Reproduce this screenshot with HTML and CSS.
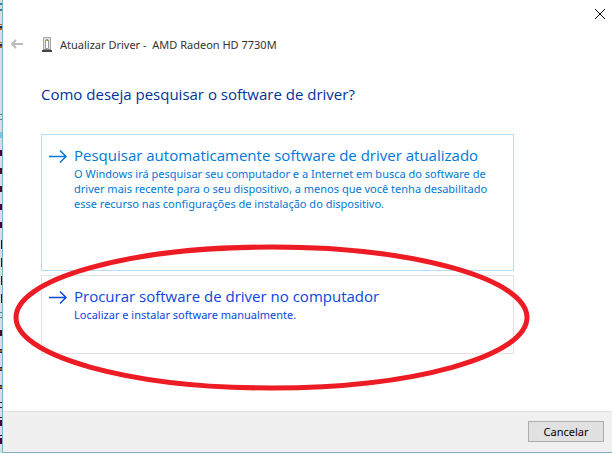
FILE: index.html
```html
<!DOCTYPE html>
<html lang="pt-BR">
<head>
  <meta charset="UTF-8">
  <meta name="viewport" content="width=device-width, initial-scale=1.0">
  <title>Atualizar Driver</title>
  <link rel="stylesheet" href="styles.css">
</head>
<body>

<div class="desktop">
  <!-- Edge of the window behind -->
  <svg class="backdrop" width="2" height="453" viewBox="0 0 2 453" aria-hidden="true">
    <path stroke="#3f7fae" stroke-width="2" d="M1 3v2M1 9v2M1 114v1M1 119v1M1 312v1M1 317v1"/>
    <path stroke="#7fc4e4" stroke-width="2" d="M1 132v6"/>
    <path stroke="#a8641c" stroke-width="2" d="M1 24v1M1 28v2M1 42v1M1 46v2M1 350v2M1 368v2M1 386v2"/>
    <path stroke="#1c2a5a" stroke-width="2" d="M1 26v2M1 44v2M1 349v1M1 352v1M1 367v1M1 370v1M1 385v1M1 388v1"/>
    <path stroke="#4a0030" stroke-width="2" d="M1 150v6M1 168v6M1 186v6M1 204v6M1 222v6M1 330v6M1 420v6M1 438v6"/>
    <path stroke="#4a0030" d="M1.500 240v9M1.500 258v9M1.500 276v9M1.500 294v9"/>
    <path stroke="#222" stroke-width="2" d="M1 402v1M1 407v1M1 417v1M1 435v1"/>
  </svg>

  <div class="window">
    <div class="titlebar">
      <button class="close-btn" title="Fechar" aria-label="Fechar">
        <svg width="10" height="10" viewBox="0 0 10 10"><path d="M0 0l10 10M10 0L0 10"/></svg>
      </button>
    </div>

    <header class="header">
      <button class="back-btn" title="Voltar" aria-label="Voltar">
        <svg width="12" height="10" viewBox="0 0 12 10"><path d="M12 5H1M5 1L1 5l4 4"/></svg>
      </button>
      <svg class="device-icon" width="10" height="15" viewBox="0 0 10 15" aria-hidden="true">
        <path fill="#e4e4e4" stroke="#a8a8a8" d="M1.500 .500h7v12h-7z"/>
        <path fill="#fff" stroke="#999" d="M3.500 11.500V3.500l1.500-1.500 1.500 1.500v8z"/>
        <path fill="#74b83a" d="M3 4l2-2 2 2H3z"/>
        <path fill="#888" d="M1 12h8v1H1z"/>
        <path fill="#444" d="M0 13h10v2H0z"/>
      </svg>
      <span class="title">Atualizar Driver -&nbsp; AMD Radeon HD 7730M</span>
    </header>

    <main class="content">
      <h1>Como deseja pesquisar o software de driver?</h1>

      <button class="option option-auto">
        <svg class="arrow" width="18" height="13" viewBox="0 0 18 13"><path d="M0 6.500h17M11 .500l6 6-6 6"/></svg>
        <span class="option-text">
          <span class="option-title">Pesquisar automaticamente software de driver atualizado</span>
          <span class="option-desc">O Windows irá pesquisar seu computador e a Internet em busca do software de<br>driver mais recente para o seu dispositivo, a menos que você tenha desabilitado<br>esse recurso nas configurações de instalação do dispositivo.</span>
        </span>
      </button>

      <div class="marked">
        <button class="option option-manual">
          <svg class="arrow" width="18" height="13" viewBox="0 0 18 13"><path d="M0 6.500h17M11 .500l6 6-6 6"/></svg>
          <span class="option-text">
            <span class="option-title">Procurar software de driver no computador</span>
            <span class="option-desc">Localizar e instalar software manualmente.</span>
          </span>
        </button>
        <!-- Red highlight around the option -->
        <svg class="highlight" viewBox="0 0 516 146" preserveAspectRatio="none" aria-hidden="true">
          <ellipse cx="258" cy="73" rx="255" ry="70"/>
        </svg>
      </div>
    </main>

    <footer class="footer">
      <button class="cancel-btn">Cancelar</button>
    </footer>
  </div>
</div>

</body>
</html>
```
FILE: styles.css
```css
* {
  box-sizing: border-box;
}

body {
  margin: 0;
  font-family: 'Noto Sans', 'Open Sans', sans-serif;
  font-size: 11px;
  line-height: 15px;
  color: #333;
  background: #dcdcdc;
}

button {
  font: inherit;
  border: none;
  padding: 0;
  background: transparent;
  cursor: pointer;
}

svg {
  display: block;
  fill: none;
}

.desktop {
  display: flex;
  align-items: stretch;
  min-height: 100vh;
}

.backdrop {
  flex: none;
}

.window {
  flex: 1;
  display: flex;
  flex-direction: column;
  background: #fff;
  border-left: 1px solid #7fb0c9;
  border-bottom: 1px solid #7fb0c9;
}

.titlebar {
  display: flex;
  justify-content: flex-end;
  height: 28px;
}

.close-btn {
  padding: 0 7px;
}

.close-btn path {
  stroke: #000;
}

.header {
  display: flex;
  align-items: center;
  height: 32px;
  padding-left: 8px;
}

.back-btn path {
  stroke: #bdbdbd;
  stroke-width: 2;
}

.device-icon {
  margin-left: 19px;
  margin-right: 8px;
}

.content {
  flex: 1;
  padding: 23px 98px 24px 38px;
}

h1 {
  margin: 0 0 29px;
  font-family: 'Open Sans', sans-serif;
  font-size: 15px;
  font-weight: 400;
  line-height: 22px;
  color: #003399;
}

.option {
  display: flex;
  align-items: flex-start;
  width: 100%;
  padding: 9px 7px;
  text-align: left;
  border: 1px solid #e3e3e3;
}

.option-auto {
  min-height: 137px;
  margin-bottom: 4px;
  color: #0078d7;
  border-color: #bcdcf4;
}

.option-manual {
  min-height: 79px;
  color: #0a46e0;
}

.arrow {
  flex: none;
  margin: 6px 7px 0 0;
}

.arrow path {
  stroke: currentColor;
  stroke-width: 1.5;
}

.option-title {
  display: block;
  font-family: 'Open Sans', sans-serif;
  font-size: 15px;
  line-height: 22px;
}

.option-desc {
  display: block;
  white-space: nowrap;
}

.marked {
  position: relative;
}

.highlight {
  position: absolute;
  top: -31px;
  left: -28px;
  width: calc(100% + 44px);
  height: calc(100% + 68px);
  pointer-events: none;
}

.highlight ellipse {
  stroke: #ed1c24;
  stroke-width: 5;
}

.footer {
  display: flex;
  justify-content: flex-end;
  padding: 9px 8px 10px;
  background: #f0f0f0;
  border-top: 1px solid #dfdfdf;
}

.cancel-btn {
  width: 76px;
  height: 21px;
  color: #000;
  background: #e1e1e1;
  border: 1px solid #adadad;
}
```
